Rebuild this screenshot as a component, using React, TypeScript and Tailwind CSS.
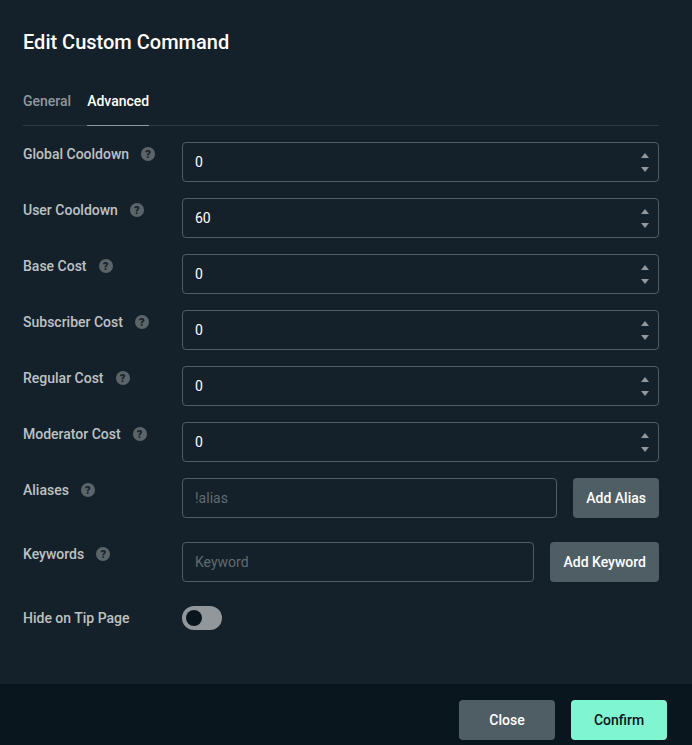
import { useState } from "react";

const numberFields = [
  { label: "Global Cooldown", value: "0" },
  { label: "User Cooldown", value: "60" },
  { label: "Base Cost", value: "0" },
  { label: "Subscriber Cost", value: "0" },
  { label: "Regular Cost", value: "0" },
  { label: "Moderator Cost", value: "0" },
];

function Help() {
  return (
    <span className="ml-3 flex h-[14px] w-[14px] items-center justify-center rounded-full bg-[#5b6469] text-[11px] font-black leading-none text-[#15212a]">
      ?
    </span>
  );
}

function FieldLabel({ text, help = true }: { text: string; help?: boolean }) {
  return (
    <div className="flex h-[24px] w-[159px] shrink-0 items-center text-sm font-medium leading-[24px] text-[#bdc2c4]">
      <span>{text}</span>
      {help && <Help />}
    </div>
  );
}

function NumberField({ label, value }: { label: string; value: string }) {
  return (
    <div className="mb-4 flex">
      <FieldLabel text={label} />
      <div className="flex h-10 flex-1 items-center justify-between rounded border border-[#4f5e65] pl-3 pr-[9px] text-sm text-white">
        <span>{value}</span>
        <div className="flex flex-col gap-[9px]">
          <div className="h-0 w-0 border-x-[4px] border-b-[5px] border-x-transparent border-b-[#91979a]" />
          <div className="h-0 w-0 border-x-[4px] border-t-[5px] border-x-transparent border-t-[#91979a]" />
        </div>
      </div>
    </div>
  );
}

function TextRow({ label, placeholder, button }: { label: string; placeholder: string; button: string }) {
  return (
    <div className="mb-6 flex">
      <FieldLabel text={label} />
      <input
        placeholder={placeholder}
        className="h-10 min-w-0 flex-1 rounded border border-[#4f5e65] bg-transparent px-3 text-sm text-white outline-none placeholder:text-[#5f6b71]"
      />
      <button className="ml-4 h-10 rounded bg-[#4f5e65] px-[13px] text-sm font-medium text-white">{button}</button>
    </div>
  );
}

export default function App() {
  const [tab] = useState("Advanced");

  return (
    <div className="flex h-[745px] w-[692px] flex-col bg-[#15212a] font-['Roboto',sans-serif]">
      <div className="flex-1 px-[23px] pr-[33px] pt-[29px]">
        <h1 className="text-xl font-medium leading-[26px] text-white">Edit Custom Command</h1>

        {/* Tabs */}
        <div className="mt-[36px] mb-4 flex gap-4 border-b border-[#2f3b42] text-sm font-medium">
          {["General", "Advanced"].map((t) => (
            <div
              key={t}
              className={
                t === tab
                  ? "-mb-px h-[35px] border-b border-[#91979a] leading-[20px] text-white"
                  : "h-[34px] leading-[20px] text-[#91979a]"
              }
            >
              {t}
            </div>
          ))}
        </div>

        {numberFields.map((f) => (
          <NumberField key={f.label} label={f.label} value={f.value} />
        ))}
        <TextRow label="Aliases" placeholder="!alias" button="Add Alias" />
        <TextRow label="Keywords" placeholder="Keyword" button="Add Keyword" />

        <div className="flex">
          <FieldLabel text="Hide on Tip Page" help={false} />
          <div className="flex h-6 w-10 items-center rounded-full bg-[#91979a] pl-[4px]">
            <div className="h-4 w-4 rounded-full bg-[#09161d]" />
          </div>
        </div>
      </div>

      {/* Footer */}
      <div className="flex h-[61px] justify-end gap-4 bg-[#09161d] pr-[25px] pt-4">
        <button className="h-10 w-24 rounded bg-[#4f5e65] text-sm font-medium text-white">Close</button>
        <button className="h-10 w-24 rounded bg-[#80f5d2] text-sm font-medium text-[#09161d]">Confirm</button>
      </div>
    </div>
  );
}
